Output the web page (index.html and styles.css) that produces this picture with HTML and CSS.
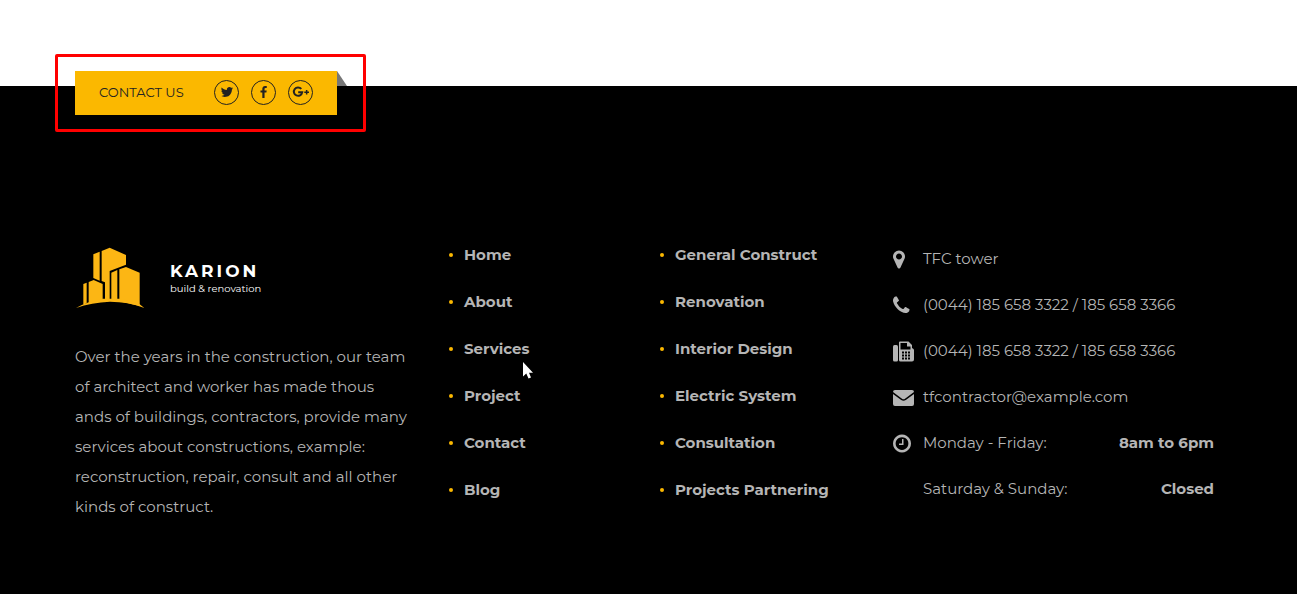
FILE: index.html
```
<!DOCTYPE html>
<html lang="en">
<head>
<meta charset="utf-8">
<title>Karion</title>
<link rel="stylesheet" href="styles.css">
</head>
<body>
<main class="page-end"></main>
<footer class="footer">
  <div class="ribbon">
    <span class="ribbon-label">CONTACT US</span>
    <a class="social" href="#" aria-label="Twitter"><svg viewBox="0 0 1792 1792" width="14" height="14"><path d="M1684 408q-67 98-162 167 1 14 1 42 0 130-38 259.5t-115.5 248.5-184.5 210.5-258 146-323 54.5q-271 0-496-145 35 4 78 4 225 0 401-138-105-2-188-64.500t-114-159.500q33 5 61 5 43 0 85-11-112-23-185.500-111.500t-73.500-205.500v-4q68 38 146 41-66-44-105-115t-39-154q0-88 44-163 121 149 294.500 238.500t371.500 99.500q-8-38-8-74 0-134 94.500-228.500t228.500-94.500q140 0 236 102 109-21 205-78-37 115-142 178 93-10 186-50z"/></svg></a>
    <a class="social" href="#" aria-label="Facebook"><svg viewBox="0 0 1792 1792" width="13" height="13"><path d="M1343 12v264h-157q-86 0-116 36t-30 108v189h293l-39 296h-254v759h-306v-759h-255v-296h255v-218q0-186 104-288.500t277-102.500q147 0 228 12z"/></svg></a>
    <a class="social" href="#" aria-label="Google Plus"><svg viewBox="0 0 18 14" width="18" height="14"><path d="M9.300 3.900A4.200 4.200 0 1 0 10.200 7.300H6.200" fill="none" stroke="currentColor" stroke-width="2"/><path d="M13.900 4.900h1.500v1.600h1.600v1.500h-1.600v1.600h-1.500V8h-1.600V6.500h1.600z"/></svg></a>
  </div>
  <div class="columns">
    <section class="about">
      <a class="brand" href="#">
        <svg viewBox="30 21 210 186" width="70" height="62" aria-hidden="true">
          <path d="M85 43L104 35V122L85 114Z"/>
          <path d="M110 33L134 23L183 45V74L134 93V178H120V127L110 123Z"/>
          <path d="M139 98L157 90V178H139Z"/>
          <path d="M163 88L183 81L224 98V198L163 184Z"/>
          <path d="M55 132L65 128V190L55 194Z"/>
          <path d="M71 126L86 120L113 132V182L71 190Z"/>
          <path d="M33 204Q66 184 113 176H163Q195 180 224 193L238 204Q190 185 135 185Q80 187 33 204Z"/>
        </svg>
        <span class="brand-text"><strong class="brand-name">KARION</strong><span class="brand-tag">build &amp; renovation</span></span>
      </a>
      <p class="intro">Over the years in the construction, our team<br>of architect and worker has made thous<br>ands of buildings, contractors, provide many<br>services about constructions, example:<br>reconstruction, repair, consult and all other<br>kinds of construct.</p>
    </section>
    <ul class="links">
      <li><a href="#">Home</a></li><li><a href="#">About</a></li><li><a href="#">Services</a></li><li><a href="#">Project</a></li><li><a href="#">Contact</a></li><li><a href="#">Blog</a></li>
    </ul>
    <ul class="links">
      <li><a href="#">General Construct</a></li><li><a href="#">Renovation</a></li><li><a href="#">Interior Design</a></li><li><a href="#">Electric System</a></li><li><a href="#">Consultation</a></li><li><a href="#">Projects Partnering</a></li>
    </ul>
    <ul class="contact">
      <li><svg viewBox="384 0 1792 1792" width="21" height="21"><path d="M1152 640q0-106-75-181t-181-75-181 75-75 181 75 181 181 75 181-75 75-181zm256 0q0 109-33 179l-364 774q-16 33-47.500 52t-67.500 19-67.500-19-46.500-52l-365-774q-33-70-33-179 0-212 150-362t362-150 362 150 150 362z"/></svg><span>TFC tower</span></li>
      <li><svg viewBox="192 0 1792 1792" width="21" height="21"><path d="M1600 1240q0 27-10 70.500t-21 68.500q-21 50-122 106-94 51-186 51-27 0-53-3.500t-57.500-12.500-47-14.500-55.500-20.500-49-18q-98-35-175-83-127-79-264-216t-216-264q-48-77-83-175-3-9-18-49t-20.500-55.500-14.500-47-12.500-57.500-3.500-53q0-92 51-186 56-101 106-122 25-11 68.500-21t70.500-10q14 0 21 3 18 6 53 76 11 19 30 54t35 63.500 31 53.500q3 4 17.500 25t21.500 35.500 7 28.500q0 20-28.500 50t-62 55-62 53-28.500 46q0 9 5 22.500t8.500 20.500 14 24 11.500 19q76 137 174 235t235 174q2 1 19 11.500t24 14 20.500 8.500 22.500 5q18 0 46-28.500t53-62 55-62 50-28.500q14 0 28.500 7t35.500 21.500 25 17.500q25 15 53.500 31t63.500 35 54 30q70 35 76 53 3 7 3 21z"/></svg><span>(0044) 185 658 3322 / 185 658 3366</span></li>
      <li><svg viewBox="0 0 21 21" width="21" height="21"><rect x="0" y="4" width="5" height="16.500" rx="1.500"/><path fill-rule="evenodd" d="M6 1.500Q6 .5 7 .5H15.500L19 4V7Q21 8 21 9V18.500Q21 20.500 19 20.500H7.500Q6 20.500 6 19ZM7.500 2V8.500H17.500V5.500H14V2ZM9 10.500V12.500H11V10.500ZM12 10.500V12.500H14V10.500ZM15 10.500V12.500H17V10.500ZM9 13.500V15.500H11V13.500ZM12 13.500V15.500H14V13.500ZM15 13.500V15.500H17V13.500ZM9 16.500V18.500H11V16.500ZM12 16.500V18.500H14V16.500ZM15 16.500V18.500H17V16.500Z"/></svg><span>(0044) 185 658 3322 / 185 658 3366</span></li>
      <li><svg viewBox="0 0 21 21" width="21" height="21"><path d="M0 5Q0 3 2 3H19Q21 3 21 5L12 11.700Q10.500 12.700 9 11.700ZM0 7L8.200 13Q10.500 14.500 12.800 13L21 7V17Q21 19 19 19H2Q0 19 0 17Z"/></svg><span>tfcontractor@example.com</span></li>
      <li><svg viewBox="128 0 1792 1792" width="21" height="21"><path d="M1024 544v448q0 14-9 23t-23 9h-320q-14 0-23-9t-9-23v-64q0-14 9-23t23-9h224v-352q0-14 9-23t23-9h64q14 0 23 9t9 23zm416 352q0-148-73-273t-198-198-273-73-273 73-198 198-73 273 73 273 198 198 273 73 273-73 198-198 73-273zm224 0q0 209-103 385.500t-279.500 279.500-385.500 103-385.500-103-279.500-279.500-103-385.500 103-385.500 279.500-279.500 385.500-103 385.500 103 279.500 279.500 103 385.500z"/></svg><span>Monday - Friday:</span><strong>8am to 6pm</strong></li>
      <li><i></i><span>Saturday &amp; Sunday:</span><strong>Closed</strong></li>
    </ul>
  </div>
</footer>
<div class="highlight"></div>
<svg class="pointer" viewBox="0 0 12 18" width="12" height="18" aria-hidden="true"><path d="M1 0V14.500L4.300 11.500L6.500 16.500L9 15.500L7 10.800H11Z" fill="#fff"/></svg>
</body>
</html>
```
FILE: styles.css
```
* { box-sizing: border-box; }
body {
  margin: 0;
  min-height: 100vh;
  display: flex;
  flex-direction: column;
  background: #fff;
  color: #b5b5b5;
  font: 400 15px/20px Montserrat, Inter, "Open Sans", sans-serif;
}
ul, p { margin: 0; padding: 0; list-style: none; }
a { color: inherit; text-decoration: none; }
svg { display: block; fill: currentColor; }
.page-end { height: 86px; }
.footer { flex: 1; padding: 0 83px 72px 75px; background: #000; }
.ribbon {
  position: relative;
  display: flex;
  align-items: center;
  gap: 12px;
  width: 262px;
  height: 44px;
  margin-top: -15px;
  padding: 0 24px 2px;
  background: #fbb800;
  color: #222;
}
.ribbon::after {
  content: "";
  position: absolute;
  left: 100%;
  top: 0;
  width: 10px;
  height: 15px;
  background: #777;
  clip-path: polygon(0 0, 100% 100%, 0 100%);
}
.ribbon-label { flex: 1; font-size: 13px; white-space: nowrap; }
.social {
  display: flex;
  align-items: center;
  justify-content: center;
  width: 25px;
  height: 25px;
  border: 1px solid #222;
  border-radius: 50%;
}
.social svg { flex: none; }
.columns {
  display: grid;
  grid-template-columns: 373fr 211fr 234fr 321fr;
  align-items: start;
  padding-top: 130px;
}
.brand { display: flex; align-items: center; gap: 25px; padding-top: 2px; color: #fff; }
.brand svg { color: #fcb614; }
.brand-text { display: flex; flex-direction: column; padding-top: 2px; }
.brand-name { font-size: 17px; line-height: 20px; letter-spacing: 3px; }
.brand-tag { font-size: 10px; line-height: 16px; }
.intro { margin-top: 33px; line-height: 30px; white-space: nowrap; }
.links { display: grid; gap: 27px; font-weight: 700; }
.links li { display: flex; align-items: center; gap: 11px; white-space: nowrap; }
.links li::before { content: ""; width: 4px; height: 4px; margin-left: 1px; border-radius: 50%; background: #fbb800; }
.contact { display: grid; gap: 26px; padding-top: 4px; }
.contact li { display: flex; align-items: center; height: 20px; gap: 9px; white-space: nowrap; }
.contact svg, .contact i { flex: none; width: 21px; }
.contact strong { margin-left: auto; }
.highlight {
  position: absolute;
  left: 55px;
  top: 54px;
  width: 311px;
  height: 78px;
  border: 3px solid #f00;
  border-radius: 2px;
}
.pointer { position: absolute; left: 522px; top: 362px; }
```
